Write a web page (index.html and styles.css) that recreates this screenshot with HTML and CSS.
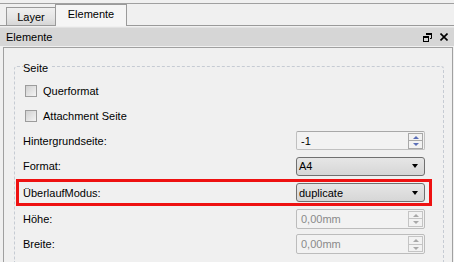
FILE: index.html
```html
<!DOCTYPE html>
<html lang="de">
<head>
	<meta charset="UTF-8">
	<title>Elemente</title>
	<link rel="stylesheet" href="styles.css">
</head>
<body>
	<div class="tabbar">
		<div class="tab">Layer</div>
		<div class="tab active">Elemente</div>
		<div class="tab-rest"></div>
	</div>
	<div class="titlebar">
		<span class="title">Elemente</span>
		<span class="title-icons">
			<svg width="9" height="9" viewBox="0 0 9 9">
				<path d="M3 0.5h5.5v5H7" fill="none" stroke="#000" stroke-width="1"/>
				<rect x="3" y="0" width="6" height="2" fill="#000"/>
				<rect x="0.5" y="3.5" width="5" height="5" fill="none" stroke="#000"/>
				<rect x="0" y="3" width="6" height="2" fill="#000"/>
			</svg>
			<svg width="8" height="8" viewBox="0 0 8 8">
				<path d="M0.5 0.5L7.5 7.5M7.5 0.5L0.5 7.5" stroke="#000" stroke-width="1.6"/>
			</svg>
		</span>
	</div>
	<main class="panel">
		<div class="group">
			<span class="group-title">Seite</span>
			<div class="row check-row">
				<span class="checkbox"></span>
				<span>Querformat</span>
			</div>
			<div class="row check-row">
				<span class="checkbox"></span>
				<span>Attachment Seite</span>
			</div>
			<div class="row">
				<span>Hintergrundseite:</span>
				<div class="spinbox">
					<span class="value">-1</span>
					<span class="spin"><i class="up"></i><i class="down"></i></span>
				</div>
			</div>
			<div class="row">
				<span>Format:</span>
				<div class="combo"><span>A4</span><i class="arrow"></i></div>
			</div>
			<div class="row tall marked">
				<span>&Uuml;berlaufModus:</span>
				<div class="combo"><span>duplicate</span><i class="arrow"></i></div>
			</div>
			<div class="row">
				<span>H&ouml;he:</span>
				<div class="spinbox disabled">
					<span class="value">0,00mm</span>
					<span class="spin"><i class="up"></i><i class="down"></i></span>
				</div>
			</div>
			<div class="row">
				<span>Breite:</span>
				<div class="spinbox disabled">
					<span class="value">0,00mm</span>
					<span class="spin"><i class="up"></i><i class="down"></i></span>
				</div>
			</div>
		</div>
	</main>
</body>
</html>
```

FILE: styles.css
```css
html{
	box-sizing: border-box;
	font-family: "Liberation Sans", Arial, sans-serif;
	font-size: 11px;
	color: #000;
}
*,
*:before,
*:after{
	box-sizing: inherit;
}
body{
	margin: 0;
	height: 262px;
	overflow: hidden;
	background-color: #f0f0f0;
}

/* tabs */
.tabbar{
	display: flex;
	align-items: flex-end;
	height: 26px;
	padding-top: 3px;
	background: linear-gradient(#f0f0f0 3px, #a0a0a0 3px, #a0a0a0 4px, #f0f0f0 4px);
}
.tabbar:before{
	content: "";
	width: 6px;
	align-self: stretch;
	border-bottom: 1px solid #9a9a9a;
}
.tab{
	height: 19px;
	width: 49px;
	padding-top: 3px;
	text-align: center;
	border: 1px solid #9a9a9a;
	border-right: 0;
	background: linear-gradient(#f0f0f0, #e4e4e4 60%, #d6d6d6);
}
.tab.active{
	height: 22px;
	width: 72px;
	padding-top: 3px;
	border-right: 1px solid #9a9a9a;
	border-bottom: 0;
	background: #f5f5f5;
}
.tab-rest{
	flex-grow: 1;
	align-self: stretch;
	border-bottom: 1px solid #9a9a9a;
}

/* dock title */
.titlebar{
	display: flex;
	justify-content: space-between;
	align-items: center;
	height: 19px;
	margin-top: 1px;
	padding: 0 6px;
	background-color: #d6d6d6;
	border-top: 1px solid #e2e2e2;
}
.title-icons{
	display: flex;
	align-items: center;
	gap: 8px;
}
.title-icons svg{
	display: block;
}

/* panel */
.panel{
	margin: 1px 1px 0 3px;
	padding: 18px 8px 0 10px;
	height: 215px;
	border: 1px solid #a0a0a0;
	border-bottom: 0;
}
.group{
	display: flex;
	flex-direction: column;
	height: 196px;
	padding: 4px 18px 0 8px;
	border: 1px dashed #c6cbd3;
	border-bottom: 0;
	border-radius: 3px 3px 0 0;
}
.group-title{
	align-self: flex-start;
	margin: -9px 0 2px 0;
	padding: 0 2px 0 0;
	height: 14px;
	background-color: #f0f0f0;
}
.row{
	display: flex;
	justify-content: space-between;
	align-items: center;
	flex-shrink: 0;
	height: 25.5px;
}
.check-row{
	justify-content: flex-start;
	gap: 6px;
	padding-left: 2px;
	height: 25px;
}
.row.tall{
	height: 27px;
}
.marked{
	position: relative;
}
.marked:after{
	content: "";
	position: absolute;
	left: -7px;
	right: -7px;
	top: 0;
	bottom: 0;
	border: 3px solid #ee1111;
}
.checkbox{
	width: 12px;
	height: 12px;
	border: 1px solid #9c9c9c;
	background: linear-gradient(135deg, #d0d0d0, #f4f4f4);
}

/* widgets */
.spinbox,
.combo{
	display: flex;
	align-items: center;
	justify-content: space-between;
	width: 129px;
	height: 19px;
}
.spinbox{
	padding: 0 1px 0 4px;
	border: 1px solid #c0c0c0;
	border-top-color: #a8a8a8;
	border-radius: 2px;
	background-color: #f2f2f2;
}
.spinbox.disabled{
	color: #8a8a8a;
	border-color: #bcbcbc;
	height: 20px;
}
.spin{
	display: flex;
	flex-direction: column;
	width: 15px;
	height: 16px;
	border: 1px solid #a8a8a8;
}
.spin i{
	flex-grow: 1;
	display: flex;
	justify-content: center;
	align-items: center;
}
.spin i + i{
	border-top: 1px solid #a8a8a8;
}
.spin i:before{
	content: "";
	border-left: 3px solid transparent;
	border-right: 3px solid transparent;
}
.spin .up:before{
	border-bottom: 3px solid #5a6fb8;
}
.spin .down:before{
	border-top: 3px solid #5a6fb8;
}
.disabled .spin{
	border-color: #c4c4c4;
}
.disabled .spin i + i{
	border-top-color: #c4c4c4;
}
.disabled .spin .up:before{
	border-bottom-color: #a8a8a8;
}
.disabled .spin .down:before{
	border-top-color: #a8a8a8;
}
.combo{
	padding: 0 6px 0 2px;
	border: 1px solid #707070;
	border-radius: 3px;
	background: linear-gradient(#e6e6e6, #d6d6d6);
}
.combo .arrow{
	border-left: 3.5px solid transparent;
	border-right: 3.5px solid transparent;
	border-top: 4px solid #000;
}
```
